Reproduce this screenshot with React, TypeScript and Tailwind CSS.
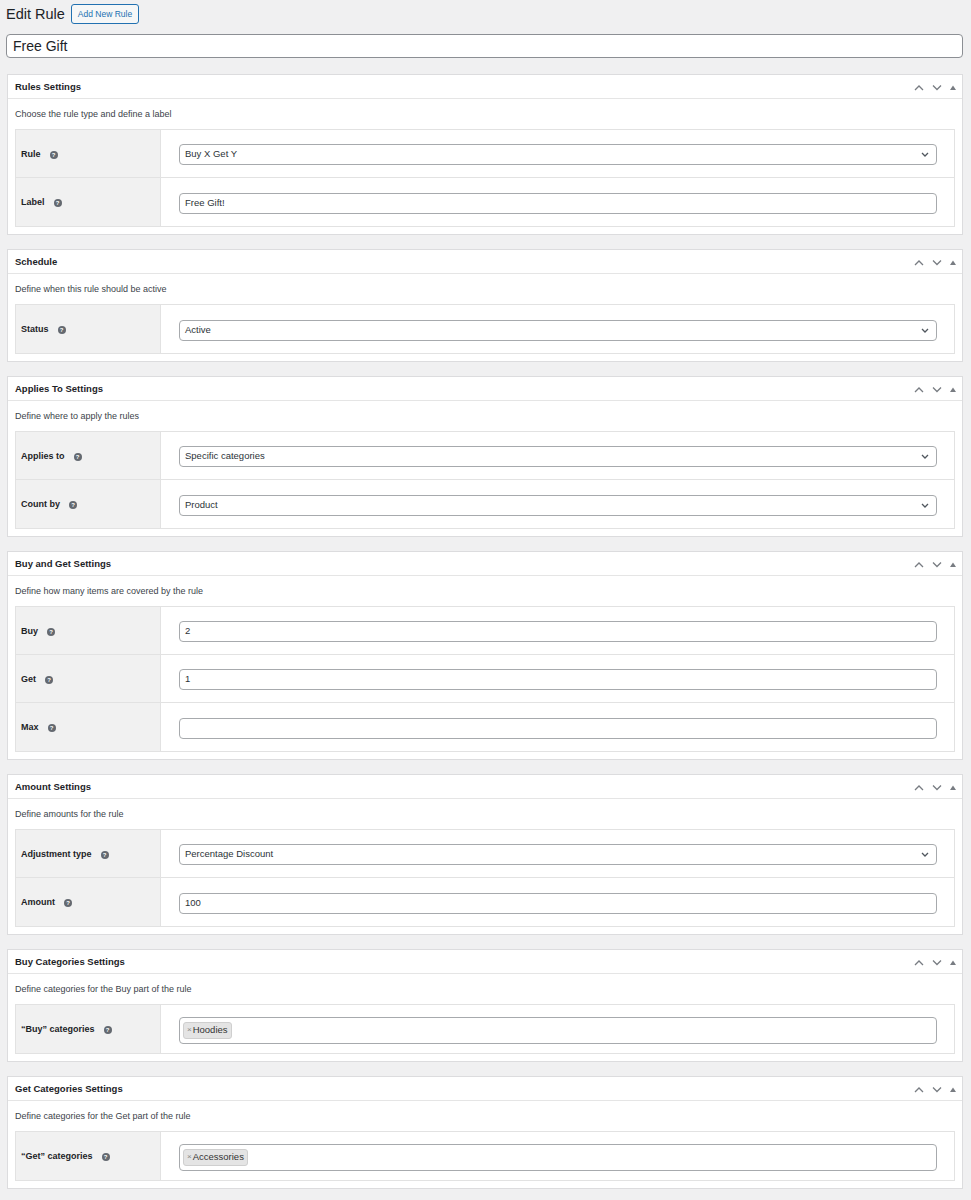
import React from "react";

type Field = {
  label: string;
  kind: "select" | "text" | "tags";
  value?: string;
  tags?: string[];
};

type Section = {
  title: string;
  description: string;
  fields: Field[];
};

const SECTIONS: Section[] = [
  {
    title: "Rules Settings",
    description: "Choose the rule type and define a label",
    fields: [
      { label: "Rule", kind: "select", value: "Buy X Get Y" },
      { label: "Label", kind: "text", value: "Free Gift!" },
    ],
  },
  {
    title: "Schedule",
    description: "Define when this rule should be active",
    fields: [{ label: "Status", kind: "select", value: "Active" }],
  },
  {
    title: "Applies To Settings",
    description: "Define where to apply the rules",
    fields: [
      { label: "Applies to", kind: "select", value: "Specific categories" },
      { label: "Count by", kind: "select", value: "Product" },
    ],
  },
  {
    title: "Buy and Get Settings",
    description: "Define how many items are covered by the rule",
    fields: [
      { label: "Buy", kind: "text", value: "2" },
      { label: "Get", kind: "text", value: "1" },
      { label: "Max", kind: "text", value: "" },
    ],
  },
  {
    title: "Amount Settings",
    description: "Define amounts for the rule",
    fields: [
      { label: "Adjustment type", kind: "select", value: "Percentage Discount" },
      { label: "Amount", kind: "text", value: "100" },
    ],
  },
  {
    title: "Buy Categories Settings",
    description: "Define categories for the Buy part of the rule",
    fields: [{ label: "\u201cBuy\u201d categories", kind: "tags", tags: ["Hoodies"] }],
  },
  {
    title: "Get Categories Settings",
    description: "Define categories for the Get part of the rule",
    fields: [{ label: "\u201cGet\u201d categories", kind: "tags", tags: ["Accessories"] }],
  },
];

function HelpIcon() {
  return (
    <span className="ml-[9px] inline-flex h-[8px] w-[8px] items-center justify-center rounded-full bg-[#646970] text-[6px] font-bold leading-none text-white">
      ?
    </span>
  );
}

function HeaderControls() {
  return (
    <div className="flex items-center gap-[8px] text-[#787c82]">
      <svg width="10" height="7" viewBox="0 0 10 7">
        <polyline points="1,6 5,2 9,6" fill="none" stroke="currentColor" strokeWidth="1.3" />
      </svg>
      <svg width="10" height="7" viewBox="0 0 10 7">
        <polyline points="1,1.5 5,5.5 9,1.5" fill="none" stroke="currentColor" strokeWidth="1.3" />
      </svg>
      <svg width="6" height="5" viewBox="0 0 6 5">
        <polygon points="0,5 3,0.5 6,5" fill="currentColor" />
      </svg>
    </div>
  );
}

function Control({ field }: { field: Field }) {
  if (field.kind === "tags") {
    return (
      <div className="flex h-[27px] w-full items-center gap-1 rounded-[4px] border border-[#a7aaad] bg-white px-[3px]">
        {field.tags?.map((t) => (
          <span
            key={t}
            className="flex h-[17px] items-center rounded-[3px] border border-[#cfcfcf] bg-[#e4e4e4] px-[3px] text-[9.5px] text-[#333]"
          >
            <span className="mr-[1px] text-[8px] text-[#888]">×</span>
            {t}
          </span>
        ))}
      </div>
    );
  }
  return (
    <div className="flex h-[21px] w-full items-center justify-between rounded-[4px] border border-[#a7aaad] bg-white pl-[5px] pr-[7px] text-[9.5px] text-[#2c3338]">
      <span>{field.value}</span>
      {field.kind === "select" && (
        <svg width="8" height="5" viewBox="0 0 8 5" className="text-[#50575e]">
          <polyline points="1,1 4,4 7,1" fill="none" stroke="currentColor" strokeWidth="1.3" />
        </svg>
      )}
    </div>
  );
}

function Panel({ section }: { section: Section }) {
  return (
    <div className="ml-[1px] border border-[#dcdcde] bg-white">
      <div className="flex h-[24px] items-center justify-between border-b border-[#e5e5e5] pl-[7px] pr-[6px] pt-[1px]">
        <h2 className="text-[9.5px] font-bold text-[#1d2327]">{section.title}</h2>
        <HeaderControls />
      </div>
      <div className="px-[7px] pb-[7px]">
        <p className="flex h-[30px] items-center pt-[2px] text-[9px] text-[#3c434a]">{section.description}</p>
        <div className="border border-[#e2e2e2]">
          {section.fields.map((f, i) => (
            <div
              key={f.label}
              className={`flex h-[48px] ${i < section.fields.length - 1 ? "border-b border-[#e2e2e2]" : ""}`}
            >
              <div className="flex w-[145px] shrink-0 items-center border-r border-[#e2e2e2] bg-[#f1f1f1] pl-[5px] pt-[2px]">
                <span className="text-[9px] font-bold text-[#1d2327]">{f.label}</span>
                <HelpIcon />
              </div>
              <div className="flex flex-1 items-center pl-[18px] pr-[17px] pt-[2px]">
                <Control field={f} />
              </div>
            </div>
          ))}
        </div>
      </div>
    </div>
  );
}

export default function App() {
  return (
    <div
      className="min-h-[1200px] bg-[#f0f0f1] pb-[6px] pl-[6px] pr-[8px] pt-[4px]"
      style={{ fontFamily: '"Liberation Sans", Arial, sans-serif' }}
    >
      <div className="flex h-[20px] items-center">
        <h1 className="text-[14.5px] leading-none text-[#1d2327]">Edit Rule</h1>
        <button className="ml-[6px] h-[20px] rounded-[3px] border border-[#2271b1] bg-[#f6f7f7] px-[6px] text-[8.5px] text-[#2271b1]">
          Add New Rule
        </button>
      </div>
      <div className="mt-[10px] flex h-[24px] items-center rounded-[4px] border border-[#8c8f94] bg-white px-[6px] text-[14px] text-[#1d2327]">
        Free Gift
      </div>
      <div className="mt-[16px] flex flex-col gap-[14px]">
        {SECTIONS.map((s) => (
          <Panel key={s.title} section={s} />
        ))}
      </div>
    </div>
  );
}
